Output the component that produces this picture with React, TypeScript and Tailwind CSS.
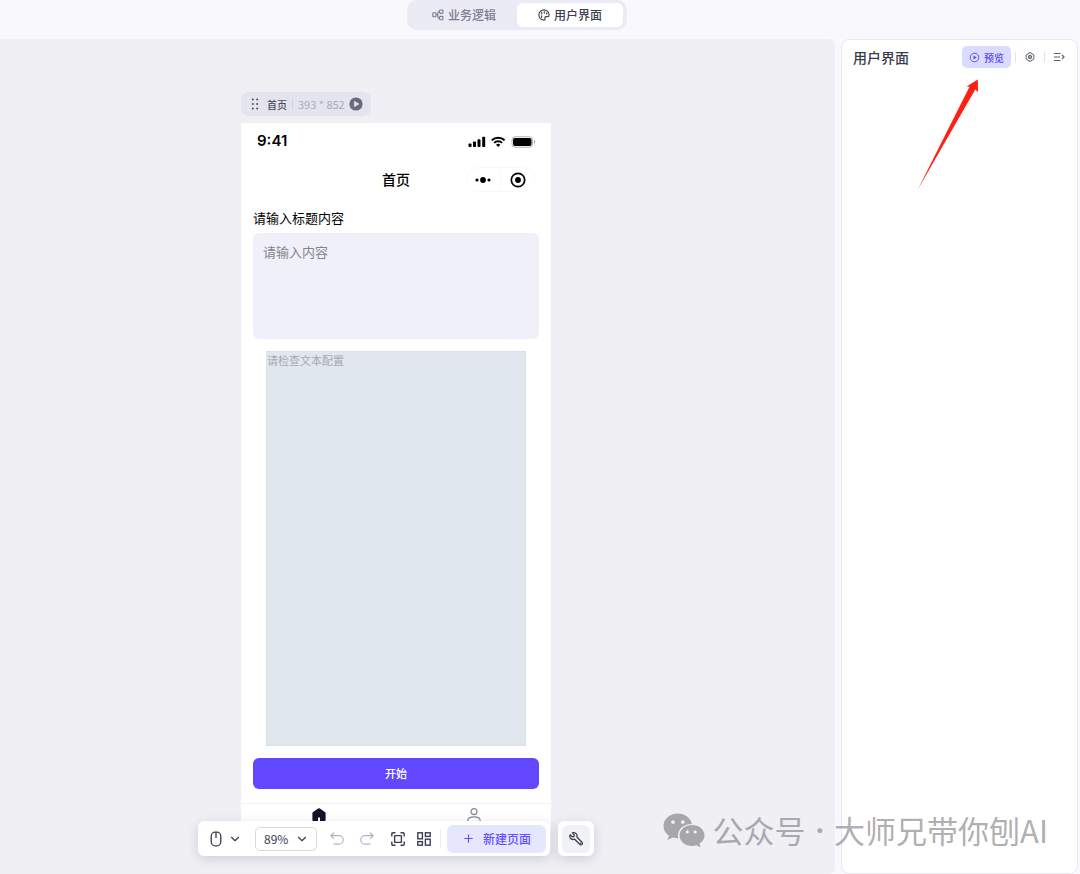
import React, { useState } from 'react';
import { ChevronDown, Plus } from 'lucide-react';

type IconProps = { className?: string };

const FlowIcon = ({ className }: IconProps) => (
  <svg className={className} viewBox="0 0 12 12" fill="none" stroke="currentColor" strokeWidth="1.100">
    <rect x="0.800" y="3.800" width="3.200" height="4" rx="0.600" />
    <rect x="7.600" y="1" width="3.400" height="3.400" rx="0.800" />
    <rect x="7.600" y="7.400" width="3.400" height="3.400" rx="0.800" />
    <path d="M4 5.800h1.800M7.600 2.700H6.800q-1 0-1 1v4.400q0 1 1 1h.8" />
  </svg>
);

const PaletteIcon = ({ className }: IconProps) => (
  <svg className={className} viewBox="0 0 12 12" fill="none" stroke="currentColor" strokeWidth="1.100">
    <path d="M6 .9a5.100 5.100 0 1 0 0 10.200c1 0 1.300-.8 1-1.500-.5-1.200.1-2 1.200-2h1.200c1.100 0 1.700-.7 1.700-1.700C11 3.200 8.800.9 6 .9Z" />
    <path d="M3.700 3.300v1.600M6.300 2.500v1.600M8.700 3.700v1.400M3.600 6.700v1.700" strokeLinecap="round" />
  </svg>
);

const GearIcon = ({ className }: IconProps) => (
  <svg className={className} viewBox="0 0 12 12" fill="none" stroke="currentColor" strokeWidth="1.200" strokeLinejoin="round">
    <path d="M4.600 1h2.800l.6 1.200 2 .7.9 2.100-.7 1 .7 1-.9 2.100-2 .7L7.400 11H4.600L4 9.800l-2-.7L1.100 7l.7-1-.7-1L2 2.900l2-.7Z" />
    <circle cx="6" cy="6" r="2.100" />
    <circle cx="6" cy="6" r="0.500" fill="currentColor" />
  </svg>
);

const CollapseIcon = ({ className }: IconProps) => (
  <svg className={className} viewBox="0 0 12 12" fill="none" stroke="currentColor" strokeWidth="1.200">
    <path d="M1 2.500h6.500M1 6h6M1 9.500h6.500M9 4l2 2-2 2" />
  </svg>
);

const CirclePlayIcon = ({ className }: IconProps) => (
  <svg className={className} viewBox="0 0 12 12" fill="none" stroke="currentColor">
    <circle cx="6" cy="6" r="4.700" />
    <path d="M4.900 3.800l3.400 2.200-3.400 2.200Z" fill="currentColor" stroke="none" />
  </svg>
);

const PlayBadge = ({ className }: IconProps) => (
  <svg className={className} viewBox="0 0 14 14">
    <circle cx="7" cy="7" r="6.600" fill="currentColor" />
    <path d="M5.300 4.300v5.400L10 7Z" fill="#e4e4ef" stroke="#e4e4ef" strokeWidth="0.600" strokeLinejoin="round" />
  </svg>
);

const DragIcon = ({ className }: IconProps) => (
  <svg className={className} viewBox="0 0 8 12" fill="currentColor">
    {[1.5, 6, 10.5].map(y => (
      <g key={y}>
        <circle cx="1.800" cy={y} r="1" />
        <circle cx="6.200" cy={y} r="1" />
      </g>
    ))}
  </svg>
);

const StatusIcons = ({ className }: IconProps) => (
  <svg className={className} viewBox="0 0 68 14" fill="#000">
    <rect x="0.500" y="8.500" width="3" height="3.500" rx="0.800" />
    <rect x="5" y="6.500" width="3" height="5.500" rx="0.800" />
    <rect x="9.500" y="4.200" width="3" height="7.800" rx="0.800" />
    <rect x="14.200" y="1.800" width="3" height="10.200" rx="0.800" />
    <g fill="none" stroke="#000" strokeWidth="2">
      <path d="M23.800 5.300a9.200 9.200 0 0 1 12.800 0" />
      <path d="M26.200 7.900a5.800 5.800 0 0 1 8 0" />
    </g>
    <path d="M28 9.800a3.200 3.200 0 0 1 4.400 0L30.200 12Z" />
    <rect x="44" y="1.800" width="20.500" height="10.400" rx="3" fill="#fff" stroke="#b0b0b0" />
    <rect x="45" y="3" width="18.500" height="8" rx="2" />
    <path d="M66 5.200q1.200.6 1.200 1.800T66 8.800Z" fill="#999" />
  </svg>
);

const TargetIcon = ({ className }: IconProps) => (
  <svg className={className} viewBox="0 0 16 16">
    <circle cx="8" cy="8" r="6.700" fill="none" stroke="#000" strokeWidth="1.700" />
    <circle cx="8" cy="8" r="2.900" />
  </svg>
);

const MoreIcon = ({ className }: IconProps) => (
  <svg className={className} viewBox="0 0 16 8">
    <circle cx="2" cy="4" r="1.600" />
    <circle cx="8" cy="4" r="2.900" />
    <circle cx="14" cy="4" r="1.600" />
  </svg>
);

const MouseIcon = ({ className }: IconProps) => (
  <svg className={className} viewBox="0 0 12 16" fill="none" stroke="currentColor" strokeWidth="1.300">
    <rect x="1.200" y="1.200" width="9.600" height="13.600" rx="4" />
    <path d="M6 1.500v5.500" />
  </svg>
);

const UndoIcon = ({ className }: IconProps) => (
  <svg className={className} viewBox="0 0 14 14" fill="none" stroke="currentColor" strokeWidth="1.200" strokeLinecap="round" strokeLinejoin="round">
    <path d="M3.700 1 .8 3.700l2.900 2.700M1 3.700h8a4.200 4.200 0 0 1 0 8.400H4" />
  </svg>
);

const FitIcon = ({ className }: IconProps) => (
  <svg className={className} viewBox="0 0 14 14" fill="none" stroke="currentColor" strokeWidth="1.400">
    <path d="M.8 4.500V2q0-1.200 1.200-1.200h2.500M9.500.8H12q1.200 0 1.200 1.200v2.500M13.200 9.500V12q0 1.200-1.200 1.200H9.500M4.500 13.200H2Q.8 13.200.8 12V9.500" />
    <rect x="3.600" y="3.600" width="6.800" height="6.800" rx="0.500" />
  </svg>
);

const GridIcon = ({ className }: IconProps) => (
  <svg className={className} viewBox="0 0 14 14" fill="none" stroke="currentColor" strokeWidth="1.400">
    <rect x="0.800" y="0.800" width="4.600" height="6" />
    <rect x="8.400" y="0.800" width="4.800" height="3.600" />
    <rect x="0.800" y="9.600" width="4.600" height="3.600" />
    <rect x="8.400" y="7.200" width="4.800" height="6" />
  </svg>
);

const WrenchIcon = ({ className }: IconProps) => (
  <svg className={className} viewBox="0 0 14 14" fill="none" stroke="currentColor" strokeWidth="1.300" strokeLinejoin="round">
    <path d="M1.200 2.800 3.300 4.900 5 4.500 5.300 2.900 3.400.9C5.500.2 7.500 1.200 8 3.100c.2.700.1 1.300-.1 1.900l5 5.200c.7.700.6 1.600.1 2.200-.6.600-1.500.6-2.200-.1L5.600 7.200C3.900 7.900 2.100 7.300 1.200 5.800c-.5-1-.5-2 0-3Z" />
    <path d="M11.300 11.200v.1" strokeLinecap="round" />
  </svg>
);

const HomeIcon = ({ className }: IconProps) => (
  <svg className={className} viewBox="0 0 14 14" fill="#12142a">
    <path d="M6.100.5q.9-.6 1.800 0l5 3.500q.7.500.7 1.300V12q0 1.500-1.500 1.500H8V9.500H6v4H1.900Q.4 13.500.4 12V5.300q0-.8.7-1.300Z" />
  </svg>
);

const UserIcon = ({ className }: IconProps) => (
  <svg className={className} viewBox="0 0 14 14" fill="none" stroke="#85869c" strokeWidth="1.200">
    <circle cx="7" cy="3.600" r="3" />
    <path d="M.9 13.500v-1.300q0-3.400 6.100-3.400t6.100 3.400v1.300" />
  </svg>
);

const WechatIcon = ({ className }: IconProps) => (
  <svg className={className} viewBox="0 0 42 35" fill="currentColor">
    <path
      fillRule="evenodd"
      d="M15 .5C6.800.5.500 6 .500 13c0 4 2 7.400 5.400 9.700L4.500 27l5.200-2.600c1.900.5 3.700.8 5.700.8-.3-1-.4-1.800-.4-2.800 0-6.600 6.200-11.600 13.900-11.400C27.500 4.800 21.800.500 15 .500ZM10 11a1.900 1.900 0 1 1 0-3.800 1.900 1.900 0 0 1 0 3.800Zm9.800 0a1.900 1.900 0 1 1 0-3.800 1.900 1.900 0 0 1 0 3.800Z"
    />
    <path
      fillRule="evenodd"
      d="M29 12c-7 0-12.500 4.700-12.500 10.500S22 33 29 33c1.500 0 3-.3 4.300-.7L37.600 34.500l-1.200-3.800c3.100-2 5.100-4.900 5.100-8.200C41.500 16.700 36 12 29 12Zm-4.600 8.500a1.600 1.600 0 1 1 0-3.200 1.600 1.600 0 0 1 0 3.200Zm7.700 0a1.600 1.600 0 1 1 0-3.200 1.600 1.600 0 0 1 0 3.200Z"
    />
  </svg>
);

const tabs = [
  { id: 'logic', label: '业务逻辑', Icon: FlowIcon },
  { id: 'ui', label: '用户界面', Icon: PaletteIcon },
];

const Header = () => {
  const [active, setActive] = useState('ui');

  return (
    <header className="h-[39px] shrink-0 flex items-start justify-center pr-[46px]">
      <nav className="h-[30px] flex items-center bg-[#ebebf5] rounded-[10px] px-1">
        {tabs.map(({ id, label, Icon }) => (
          <button
            key={id}
            onClick={() => setActive(id)}
            className={`h-6 w-[106px] flex items-center justify-center gap-1 rounded-md text-[12px] font-medium ${
              active === id ? 'bg-white text-[#3c3d4e]' : 'text-[#7b7c90]'
            }`}
          >
            <Icon className="w-3 h-3" />
            {label}
          </button>
        ))}
      </nav>
    </header>
  );
};

const PhonePreview = () => (
  <div className="w-[310px] flex flex-col">
    <div className="self-start h-6 flex items-center rounded-lg bg-[#e4e4ef] pl-[10px] pr-2 text-[10px] text-[#4a4b5c]">
      <DragIcon className="w-2 h-3 mr-2" />
      <span className="font-medium">首页</span>
      <span className="w-px h-3 bg-[#d2d2e0] mx-[5px]" />
      <span className="mr-1 text-[11px] text-[#a9aabd]">393 * 852</span>
      <button aria-label="运行">
        <PlayBadge className="w-[14px] h-[14px] text-[#686982]" />
      </button>
    </div>

    <div className="mt-[7px] h-[725px] bg-white">
      <div className="h-[37px] flex items-center justify-between pl-4 pr-[15px]">
        <span className="font-['Inter'] font-semibold text-[15px] text-black">9:41</span>
        <StatusIcons className="w-[68px] h-[14px]" />
      </div>

      <div className="relative h-[39px] flex items-center justify-center">
        <h1 className="text-[14px] font-medium text-black">首页</h1>
        <div className="absolute right-4 h-[25px] w-[69px] px-2 flex items-center justify-between border border-[#f8f8f8] rounded-full">
          <button aria-label="更多">
            <MoreIcon className="w-4 h-2" />
          </button>
          <span className="w-px h-4 bg-[#f7f7f7]" />
          <button aria-label="关闭">
            <TargetIcon className="w-4 h-4" />
          </button>
        </div>
      </div>

      <div className="px-3 pt-[9px]">
        <label htmlFor="content" className="block h-[25px] leading-5 text-[13px] text-black">
          请输入标题内容
        </label>
        <textarea
          id="content"
          placeholder="请输入内容"
          className="block w-full h-[106px] resize-none rounded-md bg-[#f0f0fa] px-[10px] py-[9px] text-[13px] leading-5 outline-none placeholder:text-[#858585]"
        />
        <div className="mx-[13px] mt-3 h-[395px] border border-[#dbe2e9] bg-[#e1e7ef] text-[11px] leading-4 text-[#a6a9ad]">
          请检查文本配置
        </div>
        <button className="mt-3 w-full h-[31px] rounded-md bg-[#6147ff] text-[11px] font-medium text-white">开始</button>
      </div>

      <div className="mt-[14px] flex justify-around border-t border-[#f2f2f6] pt-1">
        <HomeIcon className="w-[14px] h-[14px]" />
        <UserIcon className="w-[14px] h-[14px]" />
      </div>
    </div>
  </div>
);

const Toolbar = () => (
  <div className="absolute inset-x-0 bottom-[18px] pr-[43px] flex justify-center gap-2 text-[#3c3d50]">
    <div className="h-[35px] w-[352px] flex items-center rounded-md bg-white shadow-[0_3px_12px_rgba(40,40,80,0.16)] pl-3 pr-1">
      <button aria-label="鼠标模式" className="flex items-center gap-1.5">
        <MouseIcon className="w-3 h-4" />
        <ChevronDown size={14} strokeWidth={2} />
      </button>
      <div className="relative ml-[13px]">
        <select
          aria-label="缩放"
          defaultValue="89"
          className="block h-6 w-[62px] appearance-none rounded-[5px] border border-[#d6d7e3] bg-white pl-2 font-['Noto_Sans_CJK_SC'] text-[12px]"
        >
          <option value="50">50%</option>
          <option value="89">89%</option>
          <option value="100">100%</option>
        </select>
        <ChevronDown size={14} strokeWidth={2} className="pointer-events-none absolute right-2 top-[5px]" />
      </div>
      <button aria-label="撤销" className="ml-[13px] text-[#b3b4c6]">
        <UndoIcon className="w-[14px] h-[14px]" />
      </button>
      <button aria-label="重做" className="ml-4 text-[#b3b4c6]">
        <UndoIcon className="w-[14px] h-[14px] -scale-x-100" />
      </button>
      <button aria-label="适应画布" className="ml-[17px]">
        <FitIcon className="w-[14px] h-[14px]" />
      </button>
      <button aria-label="布局" className="ml-3">
        <GridIcon className="w-[14px] h-[14px]" />
      </button>
      <span className="ml-auto w-px h-[18px] bg-[#ececf3]" />
      <button className="ml-1.5 h-7 w-[99px] flex items-center justify-center gap-2 rounded-md bg-[#e6e6ff] text-[12px] font-medium text-[#6450ff]">
        <Plus size={13} strokeWidth={2} />
        新建页面
      </button>
    </div>
    <div className="h-[35px] w-9 flex items-center justify-center rounded-md bg-white shadow-[0_3px_12px_rgba(40,40,80,0.16)]">
      <button aria-label="工具" className="w-7 h-7 flex items-center justify-center rounded-md bg-[#f1f1f8]">
        <WrenchIcon className="w-[14px] h-[14px]" />
      </button>
    </div>
  </div>
);

const SidePanel = () => (
  <aside className="relative w-[237px] shrink-0 rounded-lg border border-[#e7e7f2] bg-white">
    <div className="flex items-center pt-1.5 pl-[11px] pr-3 text-[#5b5c6e]">
      <h2 className="flex-1 text-[14px] font-medium text-[#3a3b49]">用户界面</h2>
      <button className="h-[22px] w-[49px] flex items-center justify-center gap-1 rounded-[5px] bg-[#dadcff] text-[10px] font-medium text-[#5a45f5]">
        <CirclePlayIcon className="w-[11px] h-[11px]" />
        预览
      </button>
      <span className="ml-1 w-px h-[10px] bg-[#e3e3ec]" />
      <button aria-label="设置" className="ml-[9px]">
        <GearIcon className="w-[10px] h-[10px]" />
      </button>
      <span className="ml-[9px] w-px h-[10px] bg-[#e3e3ec]" />
      <button aria-label="收起" className="ml-2">
        <CollapseIcon className="w-3 h-3" />
      </button>
    </div>
    <svg className="absolute right-[98px] top-[39px] w-[62px] h-[112px]" viewBox="0 0 62 112" fill="#ff2015">
      <path d="M.5 111 52.500 7.800 49.500 7.500 60.800.5 61 13 58.300 10.500Z" />
    </svg>
  </aside>
);

const App = () => (
  <div className="relative h-screen overflow-hidden flex flex-col bg-[#f8f8fd] font-['Noto_Sans_CJK_SC',sans-serif]">
    <Header />
    <div className="flex-1 min-h-0 flex gap-1.5 pr-0.5">
      <main className="relative flex-1 min-w-0 flex items-start justify-center overflow-hidden rounded-r-md bg-[#efeff4] pt-[53px] pr-[43px]">
        <PhonePreview />
        <Toolbar />
      </main>
      <SidePanel />
    </div>
    <div className="pointer-events-none absolute right-8 bottom-[22px] flex items-center gap-2 text-[31px] leading-[44px] whitespace-nowrap text-[#6c6c70]/55">
      <WechatIcon className="w-[42px] h-[35px]" />
      <span>公众号</span>
      <span className="mx-0.5 font-['Noto_Sans'] font-semibold">·</span>
      <span>大师兄带你刨AI</span>
    </div>
  </div>
);

export default App;
